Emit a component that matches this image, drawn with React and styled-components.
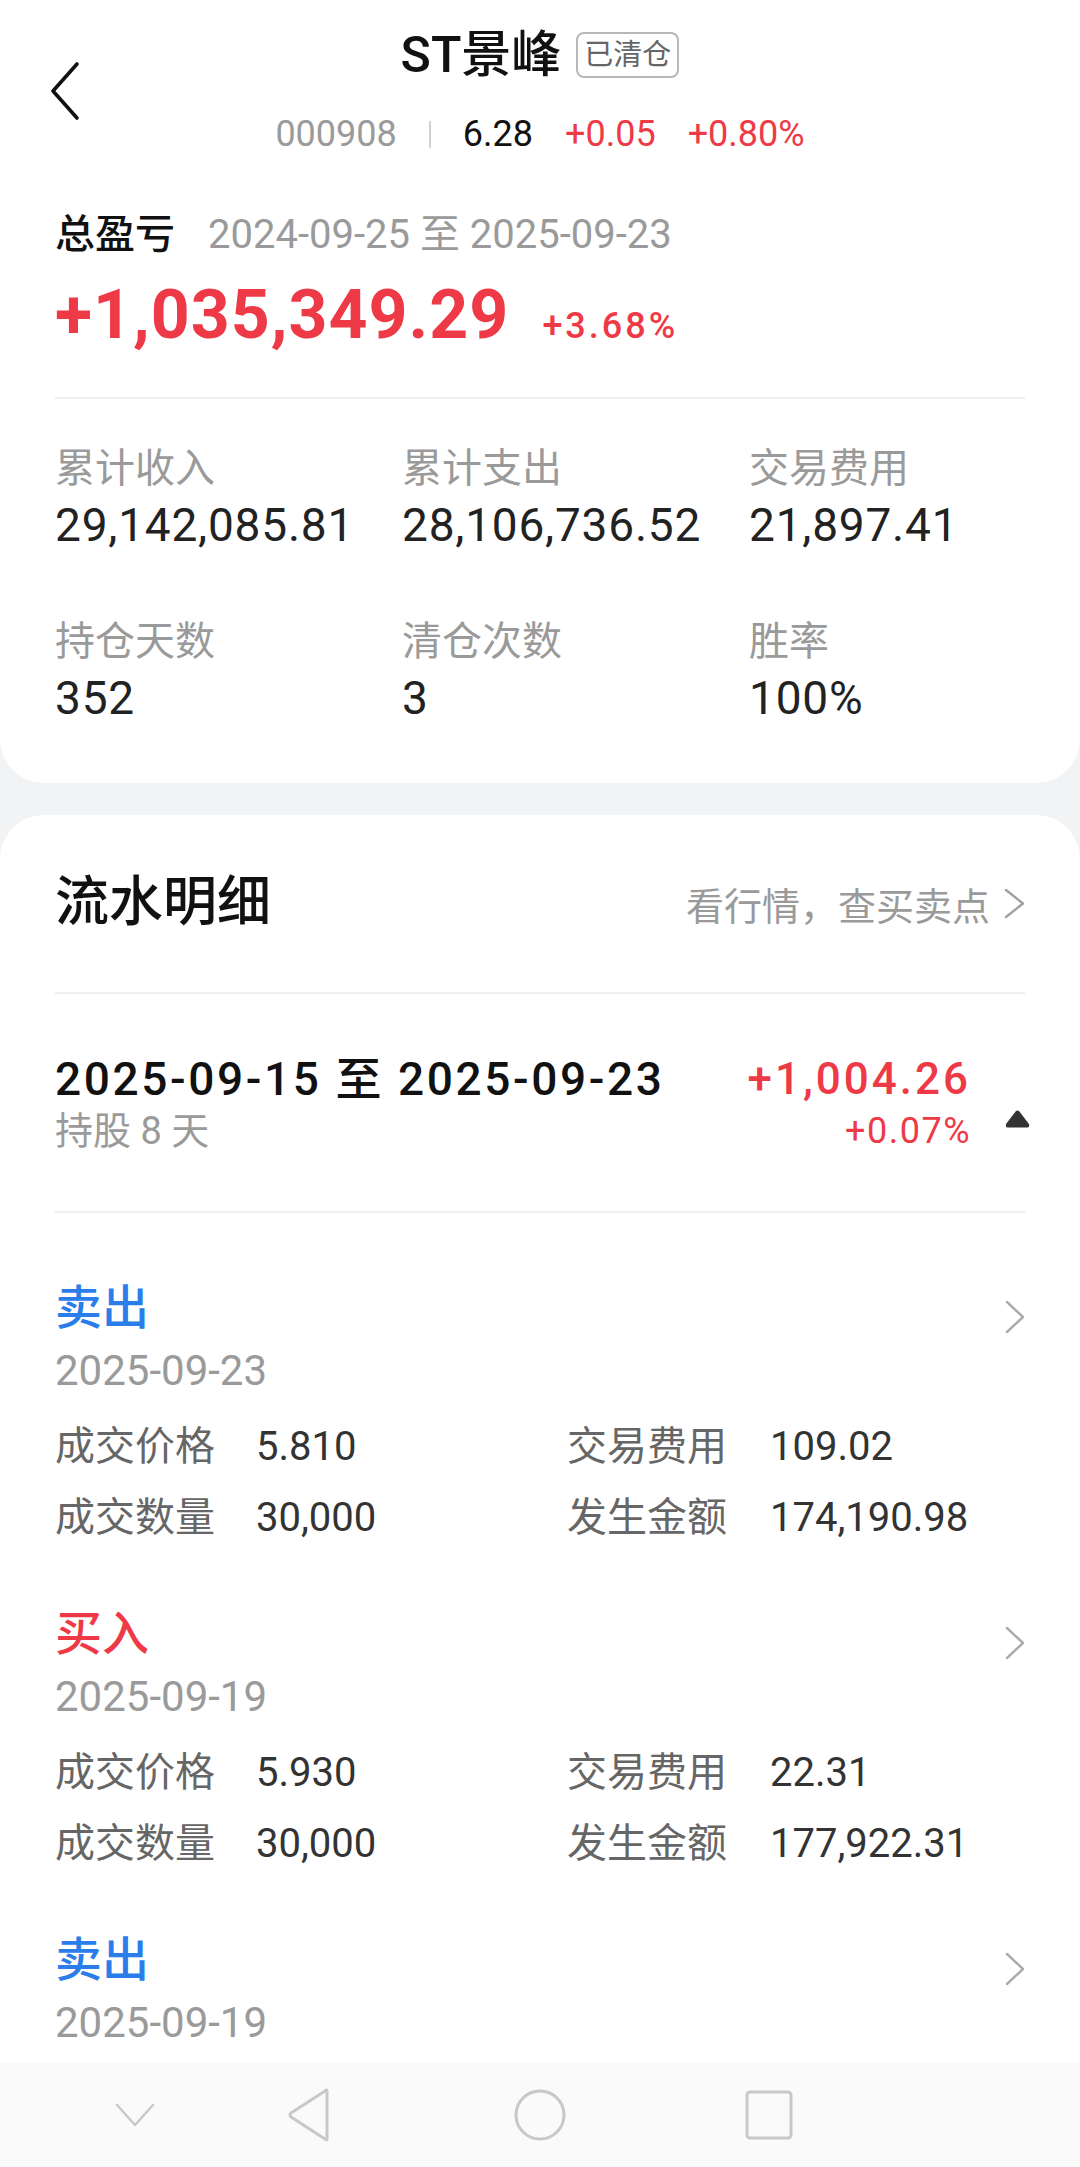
import React from 'react';
import styled, { createGlobalStyle } from 'styled-components';

const RED = '#ee3a47';
const BLUE = '#2b7de9';

const GlobalStyle = createGlobalStyle`
  * { box-sizing: border-box; }
  html, body { margin: 0; padding: 0; background: #f2f3f5; }
  body {
    font-family: Roboto, "Noto Sans CJK SC", sans-serif;
    color: #1a1a1a;
    -webkit-font-smoothing: antialiased;
  }
`;

const Screen = styled.div`
  width: 1080px;
  height: 2167px;
  display: flex;
  flex-direction: column;
  overflow: hidden;
  background: #f2f3f5;
`;

const SummaryCard = styled.section`
  background: #fff;
  border-radius: 0 0 44px 44px;
  padding: 23px 0 55px;
  flex-shrink: 0;
`;

const Header = styled.header`
  display: grid;
  grid-template-columns: 1fr auto 1fr;
  align-items: center;
`;

const BackButton = styled.div`
  padding-left: 50px;
  display: flex;
  align-items: center;
`;

const HeaderCenter = styled.div`
  display: flex;
  flex-direction: column;
  align-items: center;
`;

const TitleRow = styled.div`
  display: flex;
  align-items: center;
  gap: 15px;
  height: 64px;
`;

const Title = styled.h1`
  margin: 0;
  font-size: 50px;
  font-weight: 500;
  line-height: 64px;
  color: #111;
`;

const Badge = styled.span`
  font-size: 29px;
  line-height: 42px;
  height: 46px;
  padding: 0 6px;
  color: #666;
  border: 2px solid #b8b8b8;
  border-radius: 8px;
`;

const QuoteRow = styled.div`
  display: flex;
  align-items: center;
  gap: 32px;
  margin-top: 22px;
  font-size: 36px;
  line-height: 50px;
`;

const QuoteText = styled.span`
  color: ${(p) => p.$color || '#111'};
`;

const QuoteDivider = styled.span`
  width: 2px;
  height: 27px;
  background: #d2d2d2;
`;

const Body = styled.div`
  padding: 0 55px;
`;

const ProfitHead = styled.div`
  display: flex;
  align-items: center;
  gap: 33px;
  margin-top: 50px;
  line-height: 52px;
  font-size: 40px;
`;

const ProfitLabel = styled.span`
  color: #111;
  font-weight: 500;
`;

const ProfitRange = styled.span`
  color: #9a9a9a;
`;

const BigRow = styled.div`
  display: flex;
  align-items: baseline;
  gap: 33px;
  margin-top: 9px;
  color: ${RED};
`;

const BigNumber = styled.span`
  font-size: 68px;
  font-weight: 700;
  line-height: 90px;
  letter-spacing: 1px;
`;

const BigPct = styled.span`
  font-size: 36px;
  font-weight: 500;
  letter-spacing: 3px;
`;

const Divider = styled.div`
  height: 2px;
  background: #eeeeee;
  margin-top: ${(p) => p.$top || 0}px;
`;

const StatsGrid = styled.div`
  display: grid;
  grid-template-columns: 347px 347px 1fr;
  row-gap: 61px;
  margin-top: 44px;
`;

const Stat = styled.div`
  display: flex;
  flex-direction: column;
`;

const StatLabel = styled.span`
  font-size: 40px;
  line-height: 52px;
  color: #9a9a9a;
`;

const StatValue = styled.span`
  font-size: 46px;
  line-height: 60px;
  color: #222;
  letter-spacing: 0.8px;
`;

const DetailCard = styled.section`
  flex: 1;
  min-height: 0;
  overflow: hidden;
  margin-top: 32px;
  background: #fff;
  border-radius: 44px 44px 0 0;
  padding: 50px 55px 0;
`;

const SectionHead = styled.div`
  display: flex;
  align-items: center;
  justify-content: space-between;
  height: 76px;
`;

const SectionTitle = styled.h2`
  margin: 0;
  font-size: 54px;
  font-weight: 500;
  line-height: 76px;
  color: #111;
`;

const SectionLink = styled.span`
  display: flex;
  align-items: center;
  gap: 14px;
  font-size: 38px;
  color: #9a9a9a;
`;

const GroupRow = styled.div`
  display: flex;
  justify-content: space-between;
  padding: 57px 0 56px;
`;

const GroupLeft = styled.div`
  display: flex;
  flex-direction: column;
`;

const GroupDate = styled.span`
  font-size: 46px;
  font-weight: 500;
  line-height: 56px;
  letter-spacing: 2.6px;
  color: #111;
`;

const GroupHeld = styled.span`
  font-size: 38px;
  line-height: 48px;
  color: #9a9a9a;
`;

const GroupRight = styled.div`
  display: flex;
`;

const GroupNumbers = styled.div`
  display: flex;
  flex-direction: column;
  align-items: flex-end;
  color: ${RED};
`;

const GroupAmount = styled.span`
  font-size: 44px;
  font-weight: 500;
  line-height: 56px;
  letter-spacing: 3px;
`;

const GroupPct = styled.span`
  font-size: 36px;
  line-height: 48px;
  letter-spacing: 1.5px;
`;

const Caret = styled.svg`
  align-self: flex-end;
  margin: 0 -5px 27px 34px;
`;

const TradeList = styled.div`
  display: flex;
  flex-direction: column;
  gap: 56px;
  padding-top: 63px;
`;

const Trade = styled.div`
  display: flex;
  flex-direction: column;
`;

const TradeHead = styled.div`
  display: flex;
  align-items: center;
  justify-content: space-between;
  height: 64px;
`;

const TradeType = styled.span`
  font-size: 47px;
  font-weight: 500;
  line-height: 64px;
  color: ${(p) => (p.$buy ? RED : BLUE)};
`;

const TradeChevron = styled.svg`
  margin-top: 18px;
`;

const TradeDate = styled.span`
  margin-top: 5px;
  font-size: 42px;
  line-height: 52px;
  color: #9a9a9a;
`;

const DetailGrid = styled.div`
  display: grid;
  grid-template-columns: 201px 311px 203px 1fr;
  row-gap: 15px;
  margin-top: 22px;
  font-size: 40px;
  line-height: 56px;
`;

const DetailLabel = styled.span`
  color: #666;
`;

const DetailValue = styled.span`
  color: #333;
`;

const NavBar = styled.nav`
  flex-shrink: 0;
  height: 104px;
  background: #fafafa;
  display: flex;
  align-items: center;
`;

const NavSlot = styled.div`
  width: 80px;
  margin-left: ${(p) => p.$left}px;
  display: flex;
  justify-content: center;
  align-items: center;
`;

const Chevron = ({ w = 21, h = 31, color = '#a8a8a8' }) => (
  <svg width={w} height={h} viewBox={`0 0 ${w} ${h}`} fill="none">
    <polyline
      points={`2,2 ${w - 2},${h / 2} 2,${h - 2}`}
      stroke={color}
      strokeWidth="2.4"
      strokeLinecap="round"
      strokeLinejoin="round"
    />
  </svg>
);

const trades = [
  {
    type: '卖出',
    buy: false,
    date: '2025-09-23',
    details: { price: '5.810', fee: '109.02', qty: '30,000', amount: '174,190.98' },
  },
  {
    type: '买入',
    buy: true,
    date: '2025-09-19',
    details: { price: '5.930', fee: '22.31', qty: '30,000', amount: '177,922.31' },
  },
  {
    type: '卖出',
    buy: false,
    date: '2025-09-19',
  },
];

const stats = [
  ['累计收入', '29,142,085.81'],
  ['累计支出', '28,106,736.52'],
  ['交易费用', '21,897.41'],
  ['持仓天数', '352'],
  ['清仓次数', '3'],
  ['胜率', '100%'],
];

export default function App() {
  return (
    <>
      <GlobalStyle />
      <Screen>
        <SummaryCard>
          <Header>
            <BackButton>
              <svg width="32" height="60" viewBox="0 0 32 60" fill="none">
                <polyline
                  points="27,3 3,30 27,57"
                  stroke="#111"
                  strokeWidth="3.6"
                  strokeLinecap="round"
                  strokeLinejoin="round"
                />
              </svg>
            </BackButton>
            <HeaderCenter>
              <TitleRow>
                <Title>ST景峰</Title>
                <Badge>已清仓</Badge>
              </TitleRow>
              <QuoteRow>
                <QuoteText $color="#9a9a9a">000908</QuoteText>
                <QuoteDivider />
                <QuoteText>6.28</QuoteText>
                <QuoteText $color={RED}>+0.05</QuoteText>
                <QuoteText $color={RED}>+0.80%</QuoteText>
              </QuoteRow>
            </HeaderCenter>
            <div />
          </Header>

          <Body>
            <ProfitHead>
              <ProfitLabel>总盈亏</ProfitLabel>
              <ProfitRange>2024-09-25 至 2025-09-23</ProfitRange>
            </ProfitHead>
            <BigRow>
              <BigNumber>+1,035,349.29</BigNumber>
              <BigPct>+3.68%</BigPct>
            </BigRow>
            <Divider $top={37} />
            <StatsGrid>
              {stats.map(([label, value]) => (
                <Stat key={label}>
                  <StatLabel>{label}</StatLabel>
                  <StatValue>{value}</StatValue>
                </Stat>
              ))}
            </StatsGrid>
          </Body>
        </SummaryCard>

        <DetailCard>
          <SectionHead>
            <SectionTitle>流水明细</SectionTitle>
            <SectionLink>
              看行情，查买卖点
              <Chevron w={21} h={31} color="#a0a0a0" />
            </SectionLink>
          </SectionHead>
          <Divider $top={51} />
          <GroupRow>
            <GroupLeft>
              <GroupDate>2025-09-15 至 2025-09-23</GroupDate>
              <GroupHeld>持股 8 天</GroupHeld>
            </GroupLeft>
            <GroupRight>
              <GroupNumbers>
                <GroupAmount>+1,004.26</GroupAmount>
                <GroupPct>+0.07%</GroupPct>
              </GroupNumbers>
              <Caret width="25" height="18" viewBox="0 0 25 18">
                <path
                  d="M10.6 1.4 Q12.5 -0.6 14.4 1.4 L23.6 13.6 Q25.6 17.6 21 17.6 L4 17.6 Q-0.6 17.6 1.4 13.6 Z"
                  fill="#333"
                />
              </Caret>
            </GroupRight>
          </GroupRow>
          <Divider />
          <TradeList>
            {trades.map((t, i) => (
              <Trade key={i}>
                <TradeHead>
                  <TradeType $buy={t.buy}>{t.type}</TradeType>
                  <TradeChevron width="20" height="34" viewBox="0 0 20 34" fill="none">
                    <polyline
                      points="2,2 18,17 2,32"
                      stroke="#ababab"
                      strokeWidth="2.4"
                      strokeLinecap="round"
                      strokeLinejoin="round"
                    />
                  </TradeChevron>
                </TradeHead>
                <TradeDate>{t.date}</TradeDate>
                {t.details && (
                  <DetailGrid>
                    <DetailLabel>成交价格</DetailLabel>
                    <DetailValue>{t.details.price}</DetailValue>
                    <DetailLabel>交易费用</DetailLabel>
                    <DetailValue>{t.details.fee}</DetailValue>
                    <DetailLabel>成交数量</DetailLabel>
                    <DetailValue>{t.details.qty}</DetailValue>
                    <DetailLabel>发生金额</DetailLabel>
                    <DetailValue>{t.details.amount}</DetailValue>
                  </DetailGrid>
                )}
              </Trade>
            ))}
          </TradeList>
        </DetailCard>

        <NavBar>
          <NavSlot $left={95}>
            <svg width="40" height="24" viewBox="0 0 40 24" fill="none">
              <polyline points="2,2 20,22 38,2" stroke="#c8c8c8" strokeWidth="2.4" strokeLinejoin="round" strokeLinecap="round" />
            </svg>
          </NavSlot>
          <NavSlot $left={94}>
            <svg width="44" height="54" viewBox="0 0 44 54" fill="none">
              <path d="M40 3 L40 51 Q40 53 38 51 L4 29 Q2 27 4 25 L38 3 Q40 1 40 3 Z" stroke="#c8c8c8" strokeWidth="3" strokeLinejoin="round" />
            </svg>
          </NavSlot>
          <NavSlot $left={151}>
            <svg width="54" height="54" viewBox="0 0 54 54" fill="none">
              <circle cx="27" cy="27" r="24" stroke="#c8c8c8" strokeWidth="3" />
            </svg>
          </NavSlot>
          <NavSlot $left={149}>
            <svg width="48" height="50" viewBox="0 0 48 50" fill="none">
              <rect x="2" y="2" width="44" height="46" rx="3" stroke="#c8c8c8" strokeWidth="3" />
            </svg>
          </NavSlot>
        </NavBar>
      </Screen>
    </>
  );
}
